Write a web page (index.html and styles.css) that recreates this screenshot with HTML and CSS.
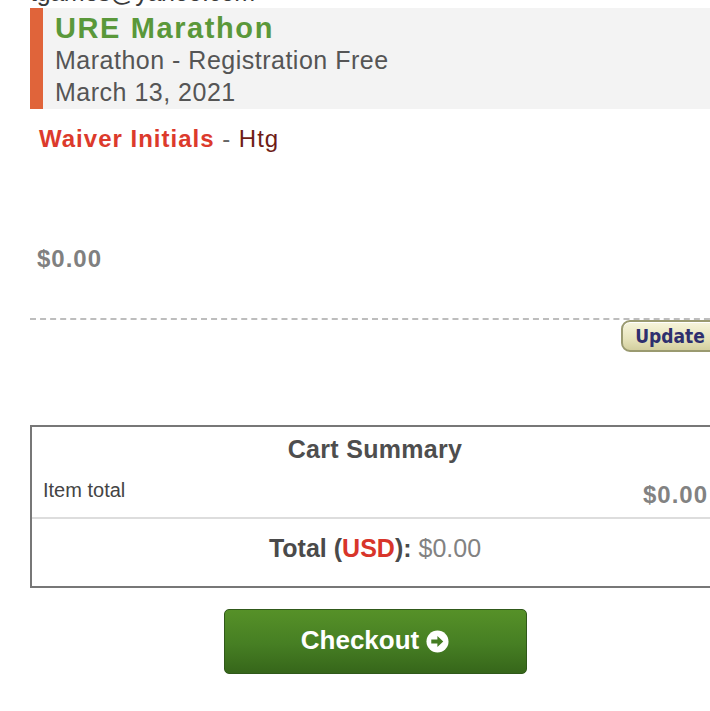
FILE: index.html
```html
<!DOCTYPE html>
<html>
<head>
<meta charset="utf-8">
<link rel="stylesheet" href="styles.css">
</head>
<body>
<div class="page">
  <div class="email">tgames@yahoo.com</div>
  <div class="event">
    <div class="event-title">URE Marathon</div>
    <div class="event-line">Marathon - Registration Free</div>
    <div class="event-line">March 13, 2021</div>
  </div>
  <div class="waiver"><span class="waiver-label">Waiver Initials</span><span class="dash"> - </span><span class="waiver-val">Htg</span></div>
  <div class="price">$0.00</div>
  <div class="divider"></div>
  <div class="update-row"><button class="update-btn">Update</button></div>
  <div class="cart">
    <div class="cart-title">Cart Summary</div>
    <div class="cart-row">
      <span class="cart-label">Item total</span>
      <span class="cart-amount">$0.00</span>
    </div>
    <div class="cart-total"><span class="tl">Total (</span><span class="usd">USD</span><span class="tl">): </span><span class="tv">$0.00</span></div>
  </div>
  <div class="checkout-wrap">
    <button class="checkout">Checkout
      <svg class="arrow" viewBox="0 0 24 24" width="23" height="23"><circle cx="12" cy="12" r="11.5" fill="#ffffff"/><path d="M5.5 9.8h6.4V6.2L18 12l-6.1 5.8v-3.6H5.5z" fill="#447c22"/></svg>
    </button>
  </div>
</div>
</body>
</html>
```
FILE: styles.css
```css
html, body {
  margin: 0;
  padding: 0;
  overflow: hidden;
  background: #ffffff;
}
body {
  font-family: "Liberation Sans", Arial, sans-serif;
  color: #555555;
}
.page {
  width: 690px;
  margin-left: 30px;
}
.email {
  font-size: 25px;
  line-height: 28px;
  margin-top: -22px;
  margin-bottom: 2px;
  color: #3a3a3a;
  letter-spacing: -0.3px;
}
.event {
  background: #f3f3f3;
  border-left: 13px solid #e0643a;
  padding: 4px 0 1px 12px;
}
.event-title {
  font-size: 29px;
  line-height: 32px;
  font-weight: bold;
  color: #5a983a;
  letter-spacing: 1.6px;
}
.event-line {
  font-size: 25px;
  line-height: 32px;
  color: #555555;
  letter-spacing: 0.5px;
}
.waiver {
  margin-top: 14px;
  padding-left: 9px;
  font-size: 24px;
  line-height: 32px;
}
.waiver-label {
  font-weight: bold;
  color: #dc3a2c;
  letter-spacing: 1px;
}
.dash { color: #666666; letter-spacing: 1px; }
.waiver-val { color: #6e1c16; letter-spacing: 1px; }
.price {
  margin-top: 89px;
  padding-left: 7px;
  font-size: 24px;
  line-height: 30px;
  font-weight: bold;
  color: #808080;
  letter-spacing: 1px;
}
.divider {
  margin-top: 44px;
  border-top: 2px dashed #bdbdbd;
}
.update-row {
  display: flex;
  justify-content: flex-end;
}
.update-btn {
  margin-right: 1px;
  width: 98px;
  height: 32px;
  padding: 0;
  border: 2px solid #9a9a70;
  border-radius: 9px;
  background: linear-gradient(#f7f5dc, #e6e3bb 60%, #d3cf9f);
  box-shadow: inset 0 1px 0 #ffffff;
  font-family: "DejaVu Sans Condensed", "DejaVu Sans", sans-serif;
  font-weight: bold;
  font-size: 19px;
  color: #2e2f6e;
  text-align: center;
}
.cart {
  margin-top: 73px;
  border: 2px solid #777777;
  padding: 4px 10px 20px 0;
}
.cart-title {
  text-align: center;
  font-size: 25px;
  line-height: 36px;
  font-weight: bold;
  color: #4e4e4e;
  padding-left: 10px;
  letter-spacing: 0.3px;
}
.cart-row {
  margin-top: 8px;
  display: flex;
  justify-content: space-between;
  align-items: flex-start;
  border-bottom: 2px solid #dddddd;
  padding: 0 10px 7px 11px;
  margin-right: -10px;
}
.cart-label {
  font-size: 20px;
  line-height: 30px;
  color: #444444;
}
.cart-amount {
  margin-top: 5px;
  font-size: 24px;
  line-height: 30px;
  font-weight: bold;
  color: #828282;
  letter-spacing: 1px;
}
.cart-total {
  margin-top: 11px;
  text-align: center;
  font-size: 25px;
  line-height: 36px;
  padding-left: 10px;
}
.tl { font-weight: bold; color: #4a4a4a; }
.usd { font-weight: bold; color: #d8352a; }
.tv { color: #828282; }
.checkout-wrap {
  margin-top: 21px;
  display: flex;
  justify-content: center;
}
.checkout {
  width: 303px;
  height: 65px;
  border: 1px solid #30591a;
  border-radius: 5px;
  background: linear-gradient(#569128, #467e23 55%, #36661a);
  color: #ffffff;
  font-family: "Liberation Sans", Arial, sans-serif;
  font-weight: bold;
  font-size: 26px;
  display: flex;
  align-items: center;
  justify-content: center;
  gap: 7px;
  padding: 0 0 2px 0;
}
.arrow { display: block; margin-top: 1px; }
```
